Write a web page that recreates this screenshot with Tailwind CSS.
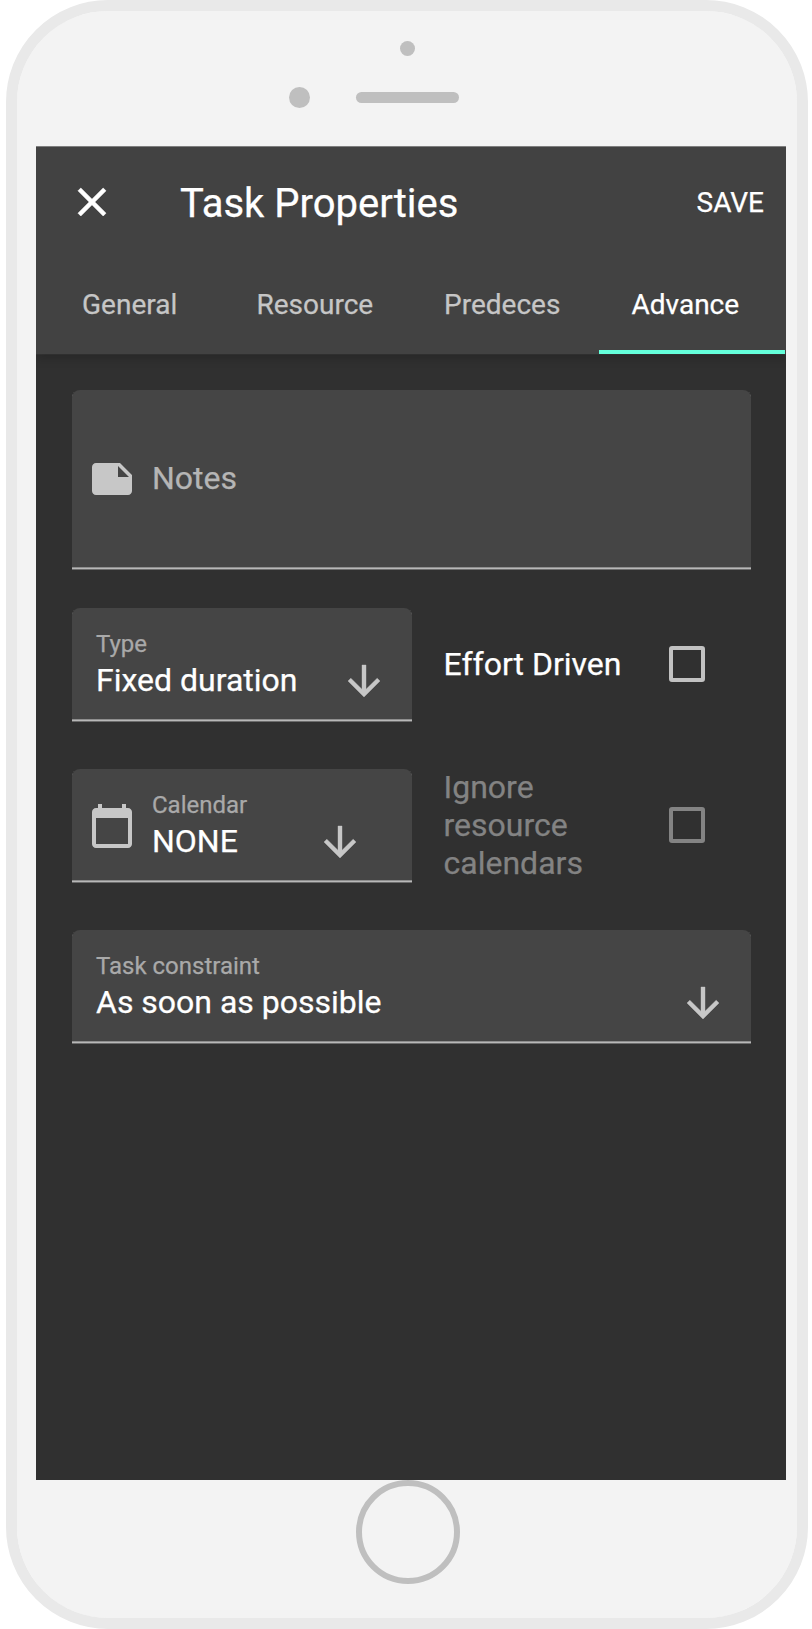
<!DOCTYPE html>
<html lang="en">
<head>
<meta charset="utf-8">
<title>Task Properties</title>
<script src="https://cdn.jsdelivr.net/npm/@tailwindcss/browser@4"></script>
</head>
<body class="bg-white overflow-hidden font-['Roboto',sans-serif] font-normal [-webkit-text-stroke:0.25px]">
<svg class="hidden">
  <symbol id="arrow" viewBox="0 0 24 24"><path d="M20 12l-1.41-1.41L13 16.17V4h-2v12.17l-5.58-5.59L4 12l8 8z"/></symbol>
</svg>
<div class="ml-[6px] w-[802px] h-[1629px] rounded-[102px] border-[11px] border-[#e9e9e9] bg-[#f3f3f3] bg-clip-padding">
  <!-- camera and speaker -->
  <div class="h-[135px] pt-[30px]">
    <div class="ml-[383px] size-[15px] rounded-full bg-[#bfbfbf]"></div>
    <div class="mt-[31px] ml-[272px] flex items-center">
      <div class="size-[21px] rounded-full bg-[#bfbfbf]"></div>
      <div class="ml-[46px] w-[103px] h-[11px] rounded-full bg-[#bfbfbf]"></div>
    </div>
  </div>

  <!-- screen -->
  <div class="ml-[19px] w-[750px] h-[1334px] bg-[#303030] text-white overflow-hidden">
    <header class="h-[208px] bg-[#424242] border-t border-[#7e7e7e] shadow-[0_4px_10px_rgba(0,0,0,0.2),0_1px_0_#383838]">
      <div class="h-[111px] flex items-center pl-8 pr-[22px]">
        <svg class="size-12 mb-px fill-white stroke-white stroke-[0.3]" viewBox="0 0 24 24"><path d="M19 6.41L17.59 5 12 10.59 6.41 5 5 6.41 10.59 12 5 17.59 6.41 19 12 13.41 17.59 19 19 17.59 13.41 12z"/></svg>
        <h1 class="ml-16 pt-[2px] text-[40px] leading-[48px]">Task Properties</h1>
        <span class="ml-auto text-[28px] leading-8">SAVE</span>
      </div>
      <nav class="h-24 grid grid-cols-4 text-[28px] leading-[32px] text-[#c6c6c6]">
        <div class="pt-[31px] pl-[46px]">General</div>
        <div class="pt-[31px] pl-[33px]">Resource</div>
        <div class="pt-[31px] pl-[33px]">Predeces</div>
        <div class="pt-[31px] pl-[33px] text-white border-b-4 border-[#64ffda] mr-px">Advance</div>
      </nav>
    </header>

    <main class="pt-9 pl-9 pr-[35px]">
      <div class="h-[180px] flex items-center rounded-t-lg bg-[#454545] border-b border-[#6c6c6c] shadow-[inset_0_-1px_0_#b8b8b8,inset_0_-2px_0_#8e8e8e] pl-4">
        <svg class="size-12 mb-px fill-[#c7c7c7]" viewBox="0 0 24 24"><path d="M22 10l-6-6H4c-1.1 0-2 .9-2 2v12.01c0 1.1.9 1.99 2 1.99l16-.01c1.1 0 2-.89 2-2v-8zm-7-4.5l5.5 5.5H15V5.5z"/></svg>
        <span class="ml-4 pb-1 text-[32px] leading-[38px] text-[#b5b5b5]">Notes</span>
      </div>

      <div class="mt-[38px] h-[114px] flex items-center">
        <div class="w-[339.5px] h-[114px] rounded-t-lg bg-[#454545] border-b border-[#6c6c6c] shadow-[inset_0_-1px_0_#b8b8b8,inset_0_-2px_0_#8e8e8e] pl-6 pr-6 pt-[22px] flex">
          <div>
            <div class="text-2xl leading-7 text-[#a9a9a9]">Type</div>
            <div class="mt-[3px] text-[32px] leading-[38px]">Fixed duration</div>
          </div>
          <svg class="ml-auto mt-[26.5px] size-12 fill-[#c7c7c7] stroke-[#c7c7c7] stroke-[0.2]"><use href="#arrow"/></svg>
        </div>
        <span class="ml-[32px] w-[225.5px] pb-[2px] text-[32px] leading-[38px]">Effort Driven</span>
        <span class="size-9 mb-[2px] rounded-[3px] border-4 border-[#c1c1c1]"></span>
      </div>

      <div class="mt-[47px] h-[114px] flex items-center">
        <div class="w-[339.5px] h-[114px] rounded-t-lg bg-[#454545] border-b border-[#6c6c6c] shadow-[inset_0_-1px_0_#b8b8b8,inset_0_-2px_0_#8e8e8e] pl-4 pr-12 pt-[22px] flex">
          <svg class="mt-[10.5px] mr-4 size-12 fill-[#c7c7c7]" viewBox="0 0 24 24"><path d="M20 3h-1V1h-2v2H7V1H5v2H4c-1.1 0-2 .9-2 2v16c0 1.1.9 2 2 2h16c1.1 0 2-.9 2-2V5c0-1.1-.9-2-2-2zm0 18H4V8h16v13z"/></svg>
          <div>
            <div class="text-2xl leading-7 text-[#a9a9a9]">Calendar</div>
            <div class="mt-[3px] text-[32px] leading-[38px]">NONE</div>
          </div>
          <svg class="ml-auto mt-[26.5px] size-12 fill-[#c7c7c7] stroke-[#c7c7c7] stroke-[0.2]"><use href="#arrow"/></svg>
        </div>
        <span class="ml-[32px] w-[225.5px] pb-[2px] text-[32px] leading-[38px] text-[#838383]">Ignore<br>resource<br>calendars</span>
        <span class="size-9 mb-[2px] rounded-[3px] border-4 border-[#838383]"></span>
      </div>

      <div class="mt-[47px] h-[114px] rounded-t-lg bg-[#454545] border-b border-[#6c6c6c] shadow-[inset_0_-1px_0_#b8b8b8,inset_0_-2px_0_#8e8e8e] pl-6 pr-6 pt-[22px] flex">
        <div>
          <div class="text-2xl leading-7 text-[#a9a9a9]">Task constraint</div>
          <div class="mt-[3px] text-[32px] leading-[38px]">As soon as possible</div>
        </div>
        <svg class="ml-auto mt-[26.5px] size-12 fill-[#c7c7c7] stroke-[#c7c7c7] stroke-[0.2]"><use href="#arrow"/></svg>
      </div>
    </main>
  </div>

  <!-- home button -->
  <div class="ml-[339px] size-[104px] rounded-full border-[6px] border-[#bfbfbf]"></div>
</div>
</body>
</html>
